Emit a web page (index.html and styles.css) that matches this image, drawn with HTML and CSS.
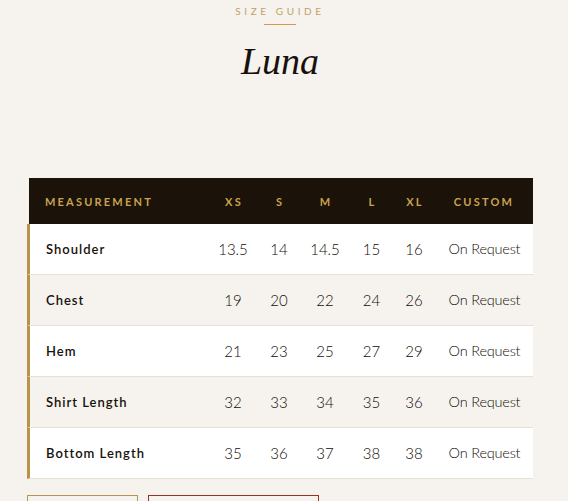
FILE: index.html
```html
<!DOCTYPE html>
<html lang="en">
<head>
<meta charset="utf-8">
<title>Luna Size Guide</title>
<link rel="stylesheet" href="styles.css">
</head>
<body>
<main class="page">
  <header class="intro">
    <p class="eyebrow">SIZE GUIDE</p>
    <span class="rule"></span>
    <h1 class="title">Luna</h1>
  </header>
  <table class="sizes">
    <colgroup>
      <col class="c-label"><col class="c-xs"><col class="c-s"><col class="c-m"><col class="c-l"><col class="c-xl"><col class="c-custom">
    </colgroup>
    <thead>
      <tr><th class="lbl">MEASUREMENT</th><th>XS</th><th>S</th><th>M</th><th>L</th><th>XL</th><th>CUSTOM</th></tr>
    </thead>
    <tbody>
      <tr><td class="lbl">Shoulder</td><td>13.5</td><td>14</td><td>14.5</td><td>15</td><td>16</td><td class="req">On Request</td></tr>
      <tr><td class="lbl">Chest</td><td>19</td><td>20</td><td>22</td><td>24</td><td>26</td><td class="req">On Request</td></tr>
      <tr><td class="lbl">Hem</td><td>21</td><td>23</td><td>25</td><td>27</td><td>29</td><td class="req">On Request</td></tr>
      <tr><td class="lbl">Shirt Length</td><td>32</td><td>33</td><td>34</td><td>35</td><td>36</td><td class="req">On Request</td></tr>
      <tr><td class="lbl">Bottom Length</td><td>35</td><td>36</td><td>37</td><td>38</td><td>38</td><td class="req">On Request</td></tr>
    </tbody>
  </table>
  <div class="actions">
    <button class="btn btn-gold" aria-label="Back to shop"></button>
    <button class="btn btn-red" aria-label="Request custom sizing"></button>
  </div>
</main>
</body>
</html>
```
FILE: styles.css
```css
* { box-sizing: border-box; }
html, body { margin: 0; padding: 0; }
body {
  background: #f6f3ee;
  font-family: Lato, "Open Sans", sans-serif;
  color: #1c140d;
}
.page {
  padding: 0 35px 40px 27px;
}
.intro {
  display: flex;
  flex-direction: column;
  align-items: center;
  padding-top: 5px;
}
.eyebrow {
  margin: 0;
  font-size: 10px;
  line-height: 12px;
  letter-spacing: 3.6px;
  color: #c2a267;
  font-weight: 400;
}
.rule {
  display: block;
  width: 32px;
  height: 1px;
  background: #c99f4f;
  margin-top: 7px;
}
.title {
  margin: 14px 0 0;
  font-family: "Liberation Serif", "DejaVu Serif", serif;
  font-style: italic;
  font-weight: 400;
  font-size: 38px;
  line-height: 44px;
  color: #18110b;
}
.sizes {
  margin-top: 95px;
  width: 506px;
  border-collapse: separate;
  border-spacing: 0;
  table-layout: fixed;
}
.c-label { width: 183px; }
.c-xs { width: 46px; }
.c-s { width: 46px; }
.c-m { width: 46px; }
.c-l { width: 47px; }
.c-xl { width: 38px; }
.c-custom { width: 100px; }
.sizes th {
  height: 46px;
  background: #1b1209;
  background-clip: padding-box;
  color: #c9a24f;
  font-size: 11px;
  font-weight: 700;
  letter-spacing: 2.2px;
  text-align: center;
  padding: 0 0 0 2px;
}
.sizes th.lbl {
  text-align: left;
  border-left: 2px solid transparent;
  padding-left: 16px;
}
.sizes td {
  height: 51px;
  text-align: center;
  font-size: 15px;
  font-weight: 300;
  color: #0f0c09;
  border-bottom: 1px solid #e7e0d5;
  padding: 0 0 1px;
}
.sizes td.req {
  font-size: 14.5px;
  letter-spacing: -0.2px;
  padding-left: 3px;
}
.sizes tbody tr:nth-child(odd) td { background: #ffffff; }
.sizes tbody tr:nth-child(even) td { background: #f6f3ee; }
.sizes td.lbl {
  text-align: left;
  border-left: 3px solid #b8934a;
  padding-left: 16px;
  font-size: 13px;
  font-weight: 600;
  letter-spacing: 1px;
  color: #17110b;
}
.actions {
  display: flex;
  gap: 10px;
  margin-top: 16px;
}
.btn {
  background: transparent;
  padding: 0;
  height: 46px;
}
.btn-gold { width: 111px; border: 1px solid #b8954c; }
.btn-red { width: 171px; border: 1px solid #9b3227; }
```
